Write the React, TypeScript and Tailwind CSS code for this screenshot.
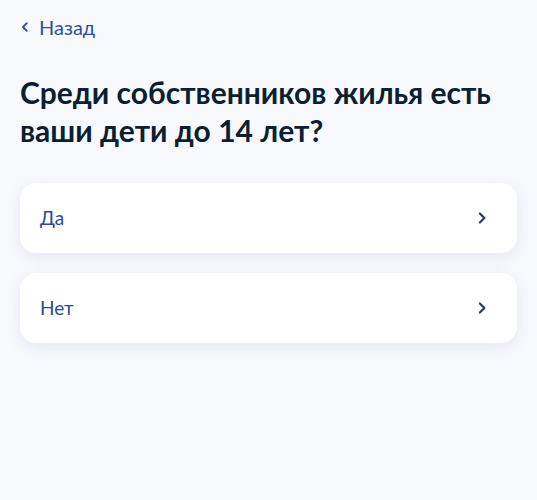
import React from "react";

function Chevron({ dir = "right", className = "" }: { dir?: "left" | "right"; className?: string }) {
  return (
    <svg viewBox="0 0 10 10" className={className} fill="none">
      {dir === "right" ? (
        <path d="M3.5 1.8 L6.7 5 L3.5 8.2" stroke="currentColor" strokeWidth="1.6" strokeLinecap="round" strokeLinejoin="round" />
      ) : (
        <path d="M6.5 1.8 L3.3 5 L6.5 8.2" stroke="currentColor" strokeWidth="1.6" strokeLinecap="round" strokeLinejoin="round" />
      )}
    </svg>
  );
}

function Option({ label }: { label: string }) {
  return (
    <div className="flex h-[70px] items-center justify-between rounded-[16px] bg-white pl-[20px] pr-[28px] shadow-[0_4px_14px_rgba(160,175,205,0.22)]">
      <span className="text-[19px] text-[#2b4a94]">{label}</span>
      <Chevron className="h-[14px] w-[14px] text-[#2a3a60]" />
    </div>
  );
}

export default function App() {
  return (
    <div className="min-h-[500px] w-full bg-[#f8f9fd] px-[20px] pt-[13px]" style={{ fontFamily: "Lato, 'Noto Sans', sans-serif" }}>
      <div className="flex items-center gap-[8px] text-[#2f4f9c]">
        <Chevron dir="left" className="h-[12px] w-[12px] -ml-[1px]" />
        <span className="text-[20px] leading-[28px]">Назад</span>
      </div>
      <h1 className="mt-[32px] text-[30px] font-bold leading-[38px] text-[#0b1f33]">
        Среди собственников жилья есть ваши дети до 14 лет?
      </h1>
      <div className="mt-[34px] flex flex-col gap-[20px]">
        <Option label="Да" />
        <Option label="Нет" />
      </div>
    </div>
  );
}
